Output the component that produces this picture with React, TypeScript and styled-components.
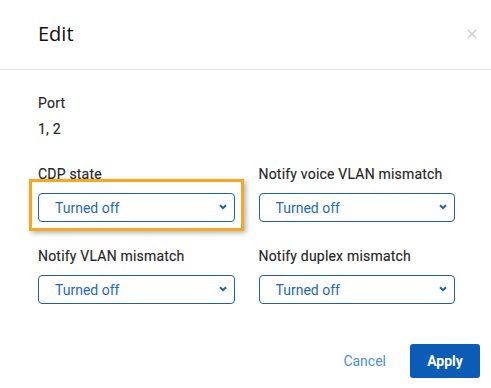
import React from "react";
import styled, { createGlobalStyle } from "styled-components";

const Global = createGlobalStyle`
  html, body { margin: 0; padding: 0; background: #ffffff; }
  body { font-family: Roboto, "Liberation Sans", sans-serif; }
  * { box-sizing: border-box; }
`;

const Modal = styled.div`
  width: 491px;
  height: 388px;
  background: #fff;
  display: flex;
  flex-direction: column;
`;

const Header = styled.header`
  height: 70px;
  border-bottom: 1px solid #e6e6e6;
  display: flex;
  align-items: flex-start;
  justify-content: space-between;
  padding: 20px 14px 0 38px;
`;

const Title = styled.h1`
  margin: 0;
  font-family: "Open Sans", sans-serif;
  font-weight: 400;
  font-size: 20px;
  line-height: 27px;
  color: #111;
`;

const Close = styled.button`
  border: none;
  background: none;
  padding: 0;
  margin-top: 8px;
  width: 11px;
  height: 11px;
  display: flex;
  align-items: center;
  justify-content: center;
  cursor: pointer;
`;

const Body = styled.div`
  padding: 23px 36px 0 38px;
  display: flex;
  flex-direction: column;
`;

const Label = styled.div`
  font-size: 14px;
  line-height: 20px;
  color: #262626;
  letter-spacing: 0.2px;
  -webkit-text-stroke: 0.15px #262626;
`;

const Value = styled(Label)`
  margin-top: 6px;
`;

const Grid = styled.div`
  margin-top: 25px;
  display: grid;
  grid-template-columns: 1fr 1fr;
  column-gap: 24px;
  row-gap: 24px;
`;

const Field = styled.div`
  display: flex;
  flex-direction: column;
  gap: 9px;
`;

const SelectWrap = styled.div`
  position: relative;
  height: 29px;
`;

const Select = styled.select`
  appearance: none;
  -webkit-appearance: none;
  width: 100%;
  height: 29px;
  border: 1px solid #1d5fae;
  border-radius: 4px;
  background: #fff;
  color: #2368bd;
  font-family: Roboto, "Liberation Sans", sans-serif;
  font-size: 14px;
  padding: 0 24px 0 16px;
  outline: none;
`;

const Chevron = styled.svg`
  position: absolute;
  right: 8px;
  top: 11px;
  pointer-events: none;
`;

const Highlight = styled.div`
  position: absolute;
  left: -9px;
  right: -9px;
  top: -14px;
  bottom: -9px;
  border: 3px solid #f6a821;
  box-shadow: 2px 2px 5px rgba(0, 0, 0, 0.3);
  pointer-events: none;
`;

const Footer = styled.footer`
  margin-top: 40px;
  display: flex;
  justify-content: flex-end;
  align-items: center;
  gap: 12px;
  padding-right: 11px;
`;

const LinkButton = styled.button`
  border: none;
  background: none;
  font-family: Roboto, "Liberation Sans", sans-serif;
  font-size: 14px;
  color: #4a8fd8;
  padding: 0 12px 0 0;
  cursor: pointer;
`;

const PrimaryButton = styled.button`
  width: 70px;
  height: 34px;
  border: none;
  border-radius: 3px;
  background: #0b5cb7;
  color: #fff;
  font-family: Roboto, "Liberation Sans", sans-serif;
  font-weight: 700;
  font-size: 14px;
  cursor: pointer;
`;

const fields = [
  { label: "CDP state", highlight: true },
  { label: "Notify voice VLAN mismatch" },
  { label: "Notify VLAN mismatch" },
  { label: "Notify duplex mismatch" },
];

export default function App() {
  return (
    <>
      <Global />
      <Modal>
        <Header>
          <Title>Edit</Title>
          <Close aria-label="Close">
            <svg width="10" height="10" viewBox="0 0 10 10">
              <path d="M1 1L9 9M9 1L1 9" stroke="#cfcfcf" strokeWidth="1.6" />
            </svg>
          </Close>
        </Header>
        <Body>
          <Label>Port</Label>
          <Value>1, 2</Value>
          <Grid>
            {fields.map((f) => (
              <Field key={f.label}>
                <Label>{f.label}</Label>
                <SelectWrap>
                  <Select defaultValue="off">
                    <option value="off">Turned off</option>
                    <option value="on">Turned on</option>
                  </Select>
                  <Chevron width="8" height="6" viewBox="0 0 8 6">
                    <path d="M1 1.2L4 4.2L7 1.2" fill="none" stroke="#1d5fae" strokeWidth="2" />
                  </Chevron>
                  {f.highlight && <Highlight />}
                </SelectWrap>
              </Field>
            ))}
          </Grid>
        </Body>
        <Footer>
          <LinkButton>Cancel</LinkButton>
          <PrimaryButton>Apply</PrimaryButton>
        </Footer>
      </Modal>
    </>
  );
}
